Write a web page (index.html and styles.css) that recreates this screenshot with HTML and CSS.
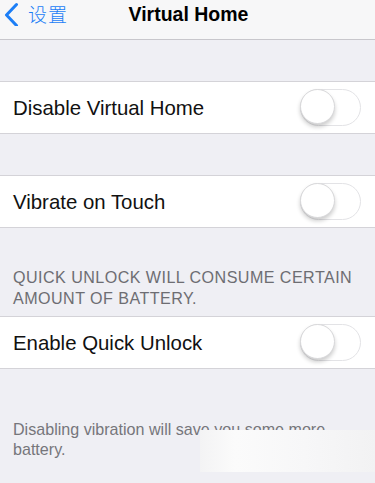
FILE: index.html
```html
<!DOCTYPE html>
<html>
<head>
<meta charset="utf-8">
<link rel="stylesheet" href="styles.css">
</head>
<body>
<div class="screen">
  <header class="nav">
    <div class="back">
      <svg class="chev" width="16" height="24" viewBox="0 0 16 24"><path d="M13.5 2.5 L3.5 13 L13.5 23.5" fill="none" stroke="#1c7ef6" stroke-width="3" stroke-linecap="round" stroke-linejoin="round"/></svg>
      <span class="back-label">设置</span>
    </div>
    <div class="title">Virtual Home</div>
  </header>

  <div class="gap"></div>
  <div class="row"><span class="label">Disable Virtual Home</span><span class="switch"><span class="knob"></span></span></div>

  <div class="gap"></div>
  <div class="row"><span class="label">Vibrate on Touch</span><span class="switch"><span class="knob"></span></span></div>

  <div class="header-note">QUICK UNLOCK WILL CONSUME CERTAIN AMOUNT OF BATTERY.</div>
  <div class="row"><span class="label">Enable Quick Unlock</span><span class="switch"><span class="knob"></span></span></div>

  <div class="footer-note">Disabling vibration will save you some more battery.
    <div class="smudge"></div>
  </div>
</div>
</body>
</html>
```

FILE: styles.css
```css
* { box-sizing: border-box; }
html, body { margin: 0; padding: 0; }
body {
  width: 375px;
  height: 483px;
  overflow: hidden;
  background: #efeff4;
  font-family: "Liberation Sans", Arial, "Noto Sans CJK SC", sans-serif;
}
.screen { width: 375px; height: 483px; background: #efeff4; }

.nav {
  position: relative;
  height: 40px;
  background: #f7f7f8;
  border-bottom: 1px solid #c8c7cc;
  display: flex;
  align-items: flex-start;
}
.back {
  display: flex;
  align-items: center;
  height: 28px;
  padding-left: 3px;
  color: #1c7ef6;
}
.chev { display: block; }
.back-label {
  margin-left: 9px;
  font-family: "Noto Sans CJK SC", sans-serif;
  font-size: 19px;
  font-weight: 300;
  letter-spacing: 1px;
  line-height: 28px;
}
.title {
  position: absolute;
  left: 0; right: 0; top: 0;
  text-align: center;
  line-height: 28px;
  font-size: 19.5px;
  font-weight: bold;
  color: #000;
  padding-left: 2px;
}

.gap { height: 41px; }

.row {
  height: 53px;
  background: #fff;
  border-top: 1px solid #d4d3d8;
  border-bottom: 1px solid #d4d3d8;
  display: flex;
  align-items: center;
  justify-content: space-between;
  padding: 0 14px 0 13px;
}
.label {
  font-size: 20.4px;
  color: #111;
  padding-top: 2px;
}
.switch {
  position: relative;
  width: 61px;
  height: 37px;
  border-radius: 19px;
  border: 1.5px solid #e3e3e6;
  background: #fff;
}
.knob {
  position: absolute;
  left: -1px; top: -1px;
  width: 35px; height: 35px;
  border-radius: 50%;
  background: #fff;
  border: 1px solid #d8d8da;
  box-shadow: 0 3px 4px rgba(0,0,0,0.2);
}

.header-note {
  padding: 39px 8px 7px 13px;
  font-size: 16.1px;
  letter-spacing: 0.45px;
  line-height: 21px;
  color: #6d6d72;
}

.footer-note {
  position: relative;
  padding: 50px 14px 0 13px;
  font-size: 16.1px;
  line-height: 20px;
  color: #76767b;
}
.smudge {
  position: absolute;
  left: 200px;
  top: 61px;
  width: 175px;
  height: 42px;
  background: linear-gradient(90deg, #f3f3f4 0%, #fbfbfb 20%, #f7f7f8 60%, #f2f2f3 100%);
}
```
